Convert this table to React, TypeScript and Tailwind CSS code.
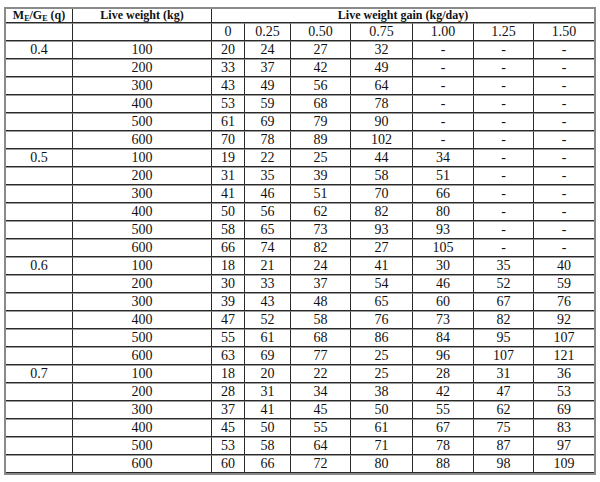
const gains = ["0", "0.25", "0.50", "0.75", "1.00", "1.25", "1.50"]

const groups: { q: string; rows: [string, string[]][] }[] = [
  {
    q: "0.4",
    rows: [
      ["100", ["20", "24", "27", "32", "-", "-", "-"]],
      ["200", ["33", "37", "42", "49", "-", "-", "-"]],
      ["300", ["43", "49", "56", "64", "-", "-", "-"]],
      ["400", ["53", "59", "68", "78", "-", "-", "-"]],
      ["500", ["61", "69", "79", "90", "-", "-", "-"]],
      ["600", ["70", "78", "89", "102", "-", "-", "-"]],
    ],
  },
  {
    q: "0.5",
    rows: [
      ["100", ["19", "22", "25", "44", "34", "-", "-"]],
      ["200", ["31", "35", "39", "58", "51", "-", "-"]],
      ["300", ["41", "46", "51", "70", "66", "-", "-"]],
      ["400", ["50", "56", "62", "82", "80", "-", "-"]],
      ["500", ["58", "65", "73", "93", "93", "-", "-"]],
      ["600", ["66", "74", "82", "27", "105", "-", "-"]],
    ],
  },
  {
    q: "0.6",
    rows: [
      ["100", ["18", "21", "24", "41", "30", "35", "40"]],
      ["200", ["30", "33", "37", "54", "46", "52", "59"]],
      ["300", ["39", "43", "48", "65", "60", "67", "76"]],
      ["400", ["47", "52", "58", "76", "73", "82", "92"]],
      ["500", ["55", "61", "68", "86", "84", "95", "107"]],
      ["600", ["63", "69", "77", "25", "96", "107", "121"]],
    ],
  },
  {
    q: "0.7",
    rows: [
      ["100", ["18", "20", "22", "25", "28", "31", "36"]],
      ["200", ["28", "31", "34", "38", "42", "47", "53"]],
      ["300", ["37", "41", "45", "50", "55", "62", "69"]],
      ["400", ["45", "50", "55", "61", "67", "75", "83"]],
      ["500", ["53", "58", "64", "71", "78", "87", "97"]],
      ["600", ["60", "66", "72", "80", "88", "98", "109"]],
    ],
  },
]

// every body row: gray line on top, dark line below, dark separators between columns
const cell = "h-[18px] p-0 text-center align-middle leading-[16px] border-t border-t-[#9a9a9a] border-b border-b-[#2a2a2a]"
const sep = "border-r border-r-[#2a2a2a]"

export default function App() {
  return (
    <div className="bg-white w-[600px] h-[482px] pt-[7px] pl-[4px] font-['Liberation_Serif',serif] text-[#111]">
      <table className="table-fixed border-separate border-spacing-0 w-[592px] border-2 border-[#8a8a8a] text-[14px]">
        <colgroup>
          <col className="w-[67px]" />
          <col className="w-[139px]" />
          <col className="w-[33px]" />
          <col className="w-[46px]" />
          <col className="w-[60px]" />
          <col className="w-[62px]" />
          <col className="w-[61px]" />
          <col className="w-[60px]" />
          <col className="w-[60px]" />
        </colgroup>
        <thead>
          <tr className="text-[12px] font-bold">
            <th className={`h-[14px] p-0 leading-[13px] text-center border-b border-b-[#2a2a2a] ${sep}`}>
              M<sub className="text-[8px]">E</sub>/G<sub className="text-[8px]">E</sub> (q)
            </th>
            <th className={`h-[14px] p-0 leading-[13px] text-center border-b border-b-[#2a2a2a] ${sep}`}>Live weight (kg)</th>
            <th colSpan={7} className="h-[14px] p-0 leading-[13px] text-center border-b border-b-[#2a2a2a]">
              Live weight gain (kg/day)
            </th>
          </tr>
          <tr className="font-normal">
            <td className={`${cell} ${sep}`}></td>
            <td className={`${cell} ${sep}`}></td>
            {gains.map((g, i) => (
              <td key={g} className={`${cell} ${i < 6 ? sep : ""}`}>
                {g}
              </td>
            ))}
          </tr>
        </thead>
        <tbody>
          {groups.map((grp) =>
            grp.rows.map(([w, vals], ri) => (
              <tr key={grp.q + w}>
                <td className={`${cell} ${sep}`}>{ri === 0 ? grp.q : ""}</td>
                <td className={`${cell} ${sep}`}>{w}</td>
                {vals.map((v, i) => (
                  <td key={i} className={`${cell} ${i < 6 ? sep : ""}`}>
                    {v}
                  </td>
                ))}
              </tr>
            ))
          )}
        </tbody>
      </table>
    </div>
  )
}
